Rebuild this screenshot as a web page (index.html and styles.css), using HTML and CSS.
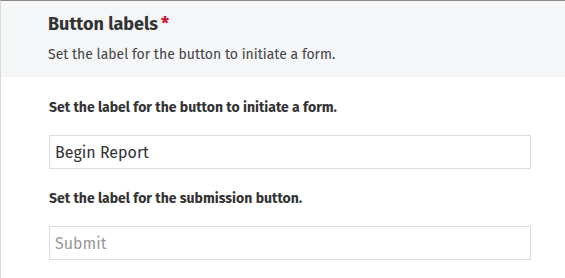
FILE: index.html
```html
<!DOCTYPE html>
<html>
<head>
<meta charset="utf-8">
<link rel="stylesheet" href="styles.css">
</head>
<body>
<div class="panel">
  <div class="header">
    <h2 class="title">Button labels<span class="req">*</span></h2>
    <p class="desc">Set the label for the button to initiate a form.</p>
  </div>
  <div class="body">
    <div class="field">
      <label class="label" for="f1">Set the label for the button to initiate a form.</label>
      <input id="f1" class="input" type="text" value="Begin Report">
    </div>
    <div class="field">
      <label class="label" for="f2">Set the label for the submission button.</label>
      <input id="f2" class="input" type="text" placeholder="Submit">
    </div>
  </div>
</div>
</body>
</html>
```
FILE: styles.css
```css
html, body {
  margin: 0;
  padding: 0;
  background: #ffffff;
}
body {
  font-family: "Fira Sans", "Open Sans", sans-serif;
  color: #333;
}
.panel {
  border-top: 1px solid #8c8c8c;
  border-left: 1px solid #dadada;
  height: 278px;
  box-sizing: border-box;
}
.header {
  background: #f5f6f8;
  padding: 11px 0 12px 47px;
}
.title {
  margin: 0;
  font-size: 18px;
  font-weight: 700;
  line-height: 24px;
  color: #333;
}
.req {
  color: #c8102e;
  margin-left: 3px;
}
.desc {
  margin: 9px 0 0;
  font-size: 14px;
  line-height: 20px;
  color: #444;
}
.body {
  padding: 22px 0 0 48px;
  display: flex;
  flex-direction: column;
  gap: 21px;
}
.field {
  display: flex;
  flex-direction: column;
  gap: 19px;
}
.label {
  font-size: 14px;
  font-weight: 700;
  line-height: 17px;
  color: #333;
}
.input {
  width: 482px;
  height: 34px;
  box-sizing: border-box;
  border: 1px solid #dcdcdc;
  padding: 0 5px;
  font-family: inherit;
  font-size: 16px;
  color: #333;
  background: #fff;
  outline: none;
  margin: 0;
}
.input::placeholder {
  color: #999;
}
```
